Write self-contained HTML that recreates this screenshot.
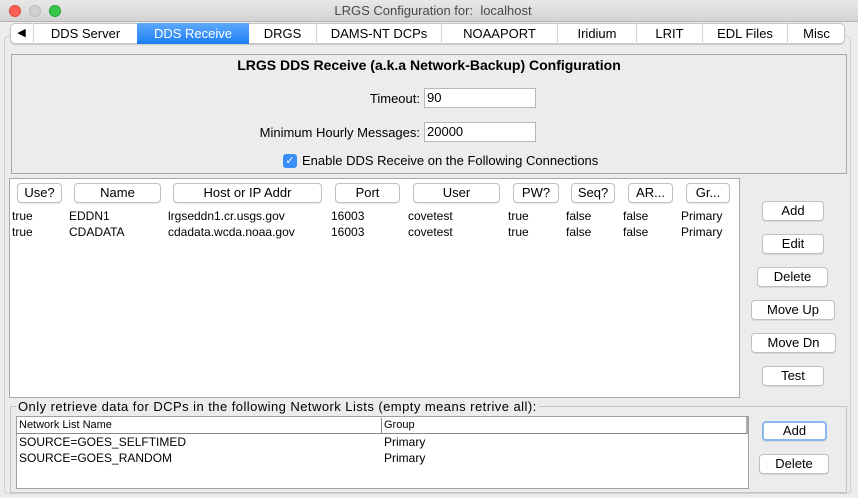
<!DOCTYPE html>
<html><head><style>
*{box-sizing:border-box;margin:0;padding:0}
body{width:858px;height:498px;background:#ececec;font-family:"Liberation Sans","DejaVu Sans",sans-serif;font-size:13px;color:#000;position:relative;overflow:hidden}
.a{position:absolute;white-space:nowrap}
.title{left:0;top:0;width:858px;height:22px;background:linear-gradient(#e8e8e8,#d3d3d3);border-bottom:1px solid #b5b5b5}
.dot{width:12px;height:12px;border-radius:50%;top:5px}
.tabs{left:10px;top:23px;width:835px;height:21px;background:#fff;border:1px solid #c4c4c4;border-radius:5px;box-shadow:0 1px 1px rgba(0,0,0,.15)}
.tab{top:23px;height:21px;line-height:21px;text-align:center;border-left:1px solid #d5d5d5;font-size:13px}
.btn{background:#fff;border:1px solid #c0c0c0;border-radius:4px;text-align:center;font-size:13px;line-height:18px;box-shadow:0 1px 0 rgba(0,0,0,.08)}
.inp{background:#fff;border:1px solid #b8b8b8;height:20px;line-height:18px;padding-left:2px;font-size:13px}
.cell{font-size:12px}
.sm{font-size:11px}
</style></head><body>
<div class="a title"></div>
<div class="a dot" style="left:9px;background:#fc5f57;border:1px solid #de4a41"></div>
<div class="a dot" style="left:29px;background:#cfcfcf;border:1px solid #bcbcbc"></div>
<div class="a dot" style="left:49px;background:#35c84a;border:1px solid #23a636"></div>
<div class="a" style="left:0;width:858px;top:3px;text-align:center;color:#4a4a4a;font-size:13px;padding-left:8px">LRGS Configuration for:&nbsp; localhost</div>
<div class="a" style="left:4px;top:36px;width:847px;height:458px;border:1px solid #d0d0d0;border-radius:4px"></div>
<div class="a tabs"></div>
<div class="a tab" style="left:10px;width:23px;border:none;font-size:11px">◀</div>
<div class="a tab" style="left:33px;width:104px">DDS Server</div>
<div class="a tab" style="left:137px;width:112px;background:linear-gradient(#5ea9fb,#1a7ef5);color:#fff;border-left:none">DDS Receive</div>
<div class="a tab" style="left:249px;width:67px;border-left:none">DRGS</div>
<div class="a tab" style="left:316px;width:125px">DAMS-NT DCPs</div>
<div class="a tab" style="left:441px;width:116px">NOAAPORT</div>
<div class="a tab" style="left:557px;width:79px">Iridium</div>
<div class="a tab" style="left:636px;width:66px">LRIT</div>
<div class="a tab" style="left:702px;width:85px">EDL Files</div>
<div class="a tab" style="left:787px;width:58px">Misc</div>

<div class="a" style="left:11px;top:54px;width:836px;height:120px;border:1px solid #a8a8a8"></div>
<div class="a" style="left:11px;width:836px;top:57px;text-align:center;font-weight:bold;font-size:14px">LRGS DDS Receive (a.k.a Network-Backup) Configuration</div>
<div class="a" style="left:200px;width:220px;top:91px;text-align:right">Timeout:</div>
<div class="a inp" style="left:424px;top:88px;width:112px">90</div>
<div class="a" style="left:200px;width:220px;top:125px;text-align:right">Minimum Hourly Messages:</div>
<div class="a inp" style="left:424px;top:122px;width:112px">20000</div>
<div class="a" style="left:283px;top:154px;width:14px;height:14px;border-radius:3px;background:#3a8ff7;color:#fff;font-size:11px;line-height:14px;text-align:center;font-weight:bold">✓</div>
<div class="a" style="left:302px;top:153px">Enable DDS Receive on the Following Connections</div>

<div class="a" style="left:9px;top:178px;width:731px;height:220px;background:#fff;border:1px solid #a8a8a8"></div>
<div class="a btn" style="left:17px;top:183px;width:45px">Use?</div>
<div class="a btn" style="left:74px;top:183px;width:87px">Name</div>
<div class="a btn" style="left:173px;top:183px;width:149px">Host or IP Addr</div>
<div class="a btn" style="left:335px;top:183px;width:65px">Port</div>
<div class="a btn" style="left:413px;top:183px;width:87px">User</div>
<div class="a btn" style="left:513px;top:183px;width:46px">PW?</div>
<div class="a btn" style="left:571px;top:183px;width:44px">Seq?</div>
<div class="a btn" style="left:628px;top:183px;width:45px">AR...</div>
<div class="a btn" style="left:686px;top:183px;width:44px">Gr...</div>
<div class="a cell" style="left:12px;top:209px">true</div><div class="a cell" style="left:69px;top:209px">EDDN1</div><div class="a cell" style="left:168px;top:209px">lrgseddn1.cr.usgs.gov</div><div class="a cell" style="left:331px;top:209px">16003</div><div class="a cell" style="left:408px;top:209px">covetest</div><div class="a cell" style="left:508px;top:209px">true</div><div class="a cell" style="left:566px;top:209px">false</div><div class="a cell" style="left:623px;top:209px">false</div><div class="a cell" style="left:681px;top:209px">Primary</div>
<div class="a cell" style="left:12px;top:225px">true</div><div class="a cell" style="left:69px;top:225px">CDADATA</div><div class="a cell" style="left:168px;top:225px">cdadata.wcda.noaa.gov</div><div class="a cell" style="left:331px;top:225px">16003</div><div class="a cell" style="left:408px;top:225px">covetest</div><div class="a cell" style="left:508px;top:225px">true</div><div class="a cell" style="left:566px;top:225px">false</div><div class="a cell" style="left:623px;top:225px">false</div><div class="a cell" style="left:681px;top:225px">Primary</div>

<div class="a btn" style="left:762px;top:201px;width:62px;height:20px">Add</div>
<div class="a btn" style="left:762px;top:234px;width:62px;height:20px">Edit</div>
<div class="a btn" style="left:757px;top:267px;width:71px;height:20px">Delete</div>
<div class="a btn" style="left:751px;top:300px;width:84px;height:20px">Move Up</div>
<div class="a btn" style="left:751px;top:333px;width:85px;height:20px">Move Dn</div>
<div class="a btn" style="left:762px;top:366px;width:62px;height:20px">Test</div>

<div class="a" style="left:10px;top:406px;width:837px;height:87px;border:1px solid #c4c4c4"></div>
<div class="a" style="left:16px;top:399px;background:#ececec;padding:0 2px;font-size:13px;letter-spacing:0.45px">Only retrieve data for DCPs in the following Network Lists (empty means retrive all):</div>
<div class="a" style="left:16px;top:416px;width:733px;height:73px;background:#fff;border:1px solid #a0a0a0"></div>
<div class="a" style="left:17px;top:417px;width:731px;height:17px;border-bottom:1px solid #888;border-right:2px solid #aaa"></div>
<div class="a" style="left:381px;top:418px;width:1px;height:15px;background:#888"></div>
<div class="a sm" style="left:19px;top:419px;font-size:11px">Network List Name</div>
<div class="a sm" style="left:384px;top:419px;font-size:11px">Group</div>
<div class="a sm" style="left:19px;top:435px;font-size:12px">SOURCE=GOES_SELFTIMED</div><div class="a sm" style="left:384px;top:435px;font-size:12px">Primary</div>
<div class="a sm" style="left:19px;top:451px;font-size:12px">SOURCE=GOES_RANDOM</div><div class="a sm" style="left:384px;top:451px;font-size:12px">Primary</div>
<div class="a btn" style="left:762px;top:421px;width:65px;height:20px;border:2px solid #8db7ef;line-height:16px">Add</div>
<div class="a btn" style="left:759px;top:454px;width:70px;height:20px">Delete</div>
</body></html>
